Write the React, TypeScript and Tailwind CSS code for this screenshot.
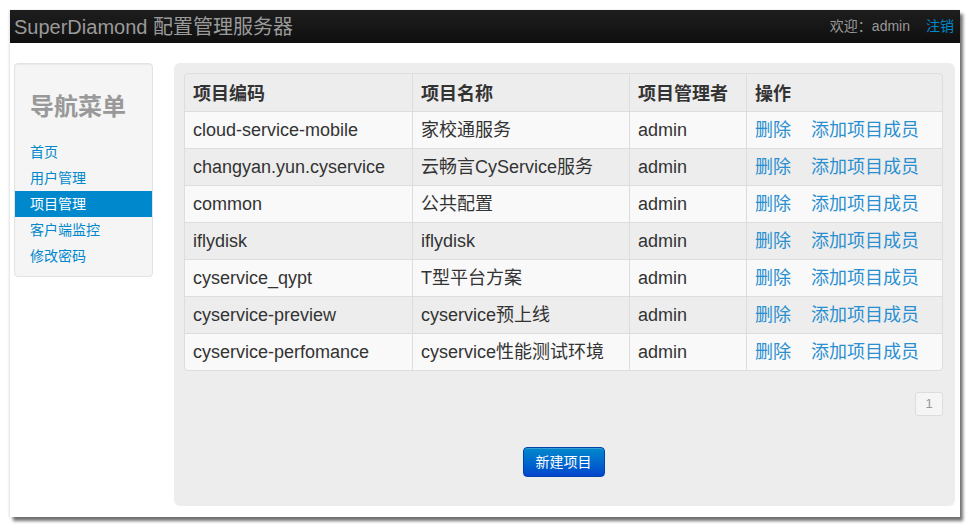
const font = { fontFamily: '"Liberation Sans", "Noto Sans CJK SC", Arial, sans-serif' }

const projects = [
  { code: "cloud-service-mobile", name: "家校通服务", owner: "admin" },
  { code: "changyan.yun.cyservice", name: "云畅言CyService服务", owner: "admin" },
  { code: "common", name: "公共配置", owner: "admin" },
  { code: "iflydisk", name: "iflydisk", owner: "admin" },
  { code: "cyservice_qypt", name: "T型平台方案", owner: "admin" },
  { code: "cyservice-preview", name: "cyservice预上线", owner: "admin" },
  { code: "cyservice-perfomance", name: "cyservice性能测试环境", owner: "admin" },
]

const menu = ["首页", "用户管理", "项目管理", "客户端监控", "修改密码"]

export default function App() {
  return (
    <div className="w-[971px] h-[529px] bg-white overflow-hidden" style={font}>
      <div className="ml-[10px] mt-[10px] w-[950px] h-[507px] bg-white flex flex-col shadow-[3px_4px_3px_rgba(0,0,0,0.55),-1px_0_2px_rgba(0,0,0,0.12)]">
        {/* navbar */}
        <div className="h-[33px] shrink-0 bg-gradient-to-b from-[#1e1e1e] to-[#0f0f0f] flex items-center justify-between pl-[4px] pr-[6px]">
          <div className="text-[#9a9a9a] text-[20px] leading-none">
            SuperDiamond 配置管理服务器
          </div>
          <div className="flex items-center text-[14px]">
            <span className="text-[#999]">欢迎：admin</span>
            <a className="text-[#0088cc] ml-[16px]">注销</a>
          </div>
        </div>

        {/* body */}
        <div className="flex pl-[4px] pr-[5px] pt-[20px]">
          {/* sidebar */}
          <div className="w-[139px] h-[214px] shrink-0 bg-[#f5f5f5] border border-[#e3e3e3] rounded-[4px] shadow-[inset_0_1px_1px_rgba(0,0,0,0.05)]">
            <div className="pt-[28px] pl-[15px] text-[24px] font-bold text-[#999] leading-[30px]">导航菜单</div>
            <ul className="mt-[17px] text-[14px]">
              {menu.map((m) => (
                <li
                  key={m}
                  className={
                    m === "项目管理"
                      ? "h-[26px] flex items-center pl-[15px] bg-[#0088cc] text-white"
                      : "h-[26px] flex items-center pl-[15px] text-[#0088cc]"
                  }
                >
                  {m}
                </li>
              ))}
            </ul>
          </div>

          {/* main well */}
          <div className="ml-[21px] w-[781px] h-[443px] bg-[#ededed] rounded-[6px] pt-[10px] pl-[10px] pr-[12px] flex flex-col">
            <table className="w-[759px] border-separate border-spacing-0 border border-[#dddddd] rounded-[4px] text-[18px] text-[#333] table-fixed">
              <colgroup>
                <col className="w-[227px]" />
                <col className="w-[217px]" />
                <col className="w-[117px]" />
                <col />
              </colgroup>
              <thead>
                <tr className="h-[37px]">
                  <th className="text-left font-bold px-[8px] pt-[3px]">项目编码</th>
                  <th className="text-left font-bold px-[8px] pt-[3px] border-l border-[#dddddd]">项目名称</th>
                  <th className="text-left font-bold px-[8px] pt-[3px] border-l border-[#dddddd]">项目管理者</th>
                  <th className="text-left font-bold px-[8px] pt-[3px] border-l border-[#dddddd]">操作</th>
                </tr>
              </thead>
              <tbody>
                {projects.map((p, i) => (
                  <tr key={p.code} className={i % 2 === 0 ? "h-[37px] bg-[#f9f9f9]" : "h-[37px]"}>
                    <td className={i === projects.length - 1 ? "px-[8px] border-t border-[#dddddd] rounded-bl-[4px]" : "px-[8px] border-t border-[#dddddd]"}>{p.code}</td>
                    <td className="px-[8px] border-t border-l border-[#dddddd]">{p.name}</td>
                    <td className="px-[8px] border-t border-l border-[#dddddd]">{p.owner}</td>
                    <td className={i === projects.length - 1 ? "px-[8px] border-t border-l border-[#dddddd] rounded-br-[4px]" : "px-[8px] border-t border-l border-[#dddddd]"}>
                      <a className="text-[#2a8fd0]">删除</a>
                      <a className="text-[#2a8fd0] ml-[20px]">添加项目成员</a>
                    </td>
                  </tr>
                ))}
              </tbody>
            </table>

            <div className="w-[759px] flex justify-end mt-[21px]">
              <span className="w-[28px] h-[24px] flex items-center justify-center bg-[#f5f5f5] border border-[#dddddd] rounded-[3px] text-[13px] text-[#999]">
                1
              </span>
            </div>

            <div className="w-[759px] flex justify-center mt-[31px]">
              <button className="w-[82px] h-[30px] rounded-[4px] bg-gradient-to-b from-[#0088cc] to-[#0044cc] border border-[#0044aa] text-white text-[14px] shadow-[inset_0_1px_0_rgba(255,255,255,0.2)]">
                新建项目
              </button>
            </div>
          </div>
        </div>
      </div>
    </div>
  )
}
